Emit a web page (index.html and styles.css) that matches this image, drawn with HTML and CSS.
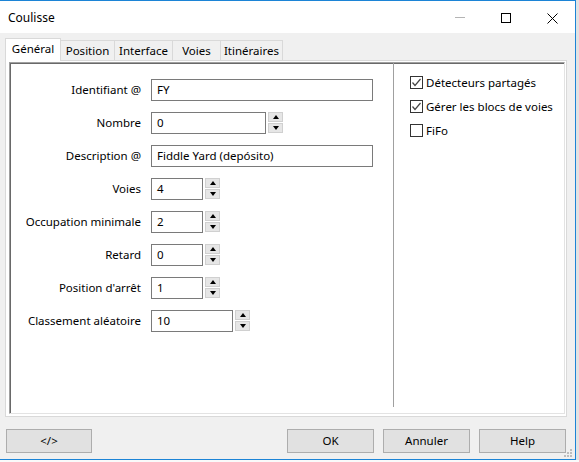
FILE: index.html
```html
<!DOCTYPE html>
<html lang="fr">
<head>
<meta charset="utf-8">
<title>Coulisse</title>
<link rel="stylesheet" href="styles.css">
</head>
<body>
<div class="window">
  <div class="titlebar">
    <span class="title">Coulisse</span>
    <div class="controls">
      <div class="ctl"><svg width="10" height="10" viewBox="0 0 10 10"><path d="M0 4.5H10" stroke="#b4b4b4" stroke-width="1"/></svg></div>
      <div class="ctl"><svg width="10" height="10" viewBox="0 0 10 10"><rect x="0.5" y="0.5" width="9" height="9" fill="none" stroke="#000" stroke-width="1"/></svg></div>
      <div class="ctl"><svg width="11" height="11" viewBox="0 0 11 11"><path d="M0.5 0.5L10.5 10.5M10.5 0.5L0.5 10.5" stroke="#000" stroke-width="1"/></svg></div>
    </div>
  </div>
  <div class="client">
    <div class="tabs">
      <div class="tab active w-gen">Général</div>
      <div class="tab w-pos">Position</div>
      <div class="tab w-int">Interface</div>
      <div class="tab w-voi">Voies</div>
      <div class="tab w-iti">Itinéraires</div>
    </div>
    <div class="panel">
      <div class="frame">
        <div class="form">
          <label class="lbl">Identifiant @</label>
          <div class="field"><div class="input w-long">FY</div></div>

          <label class="lbl">Nombre</label>
          <div class="field"><div class="input w-mid">0</div><div class="spin"><div class="sb"><i class="up"></i></div><div class="sb"><i class="down"></i></div></div></div>

          <label class="lbl">Description @</label>
          <div class="field"><div class="input w-long">Fiddle Yard (depósito)</div></div>

          <label class="lbl">Voies</label>
          <div class="field"><div class="input w-short">4</div><div class="spin"><div class="sb"><i class="up"></i></div><div class="sb"><i class="down"></i></div></div></div>

          <label class="lbl">Occupation minimale</label>
          <div class="field"><div class="input w-short">2</div><div class="spin"><div class="sb"><i class="up"></i></div><div class="sb"><i class="down"></i></div></div></div>

          <label class="lbl">Retard</label>
          <div class="field"><div class="input w-short">0</div><div class="spin"><div class="sb"><i class="up"></i></div><div class="sb"><i class="down"></i></div></div></div>

          <label class="lbl">Position d'arrêt</label>
          <div class="field"><div class="input w-short">1</div><div class="spin"><div class="sb"><i class="up"></i></div><div class="sb"><i class="down"></i></div></div></div>

          <label class="lbl">Classement aléatoire</label>
          <div class="field"><div class="input w-cls">10</div><div class="spin"><div class="sb"><i class="up"></i></div><div class="sb"><i class="down"></i></div></div></div>
        </div>
        <div class="options">
          <div class="check"><span class="box"><svg width="11" height="11" viewBox="0 0 11 11"><path d="M1.5 5.5L4 8.5L9.5 2" fill="none" stroke="#444" stroke-width="1.2"/></svg></span><span class="ctext">Détecteurs partagés</span></div>
          <div class="check"><span class="box"><svg width="11" height="11" viewBox="0 0 11 11"><path d="M1.5 5.5L4 8.5L9.5 2" fill="none" stroke="#444" stroke-width="1.2"/></svg></span><span class="ctext">Gérer les blocs de voies</span></div>
          <div class="check"><span class="box"></span><span class="ctext">FiFo</span></div>
        </div>
      </div>
    </div>
    <div class="buttons">
      <div class="btn">&lt;/&gt;</div>
      <div class="btn-group">
        <div class="btn">OK</div>
        <div class="btn">Annuler</div>
        <div class="btn">Help</div>
      </div>
    </div>
  </div>
  <svg class="grip" width="9" height="9" viewBox="0 0 9 9">
    <rect x="6" y="0" width="2" height="2" fill="#bdbdbd"/>
    <rect x="3" y="3" width="2" height="2" fill="#bdbdbd"/>
    <rect x="6" y="3" width="2" height="2" fill="#bdbdbd"/>
    <rect x="0" y="6" width="2" height="2" fill="#bdbdbd"/>
    <rect x="3" y="6" width="2" height="2" fill="#bdbdbd"/>
    <rect x="6" y="6" width="2" height="2" fill="#bdbdbd"/>
  </svg>
</div>
<div class="behind"></div>
</body>
</html>
```
FILE: styles.css
```css
html, body {
  margin: 0;
  padding: 0;
}
body {
  width: 579px;
  height: 462px;
  overflow: hidden;
  background: #e2e2e2;
  font-family: "Noto Sans", "Open Sans", sans-serif;
  font-size: 11.5px;
  color: #000;
}
.window {
  position: relative;
  box-sizing: border-box;
  width: 576px;
  height: 460px;
  border: 1px solid #1c84d6;
  border-left: none;
  display: flex;
  flex-direction: column;
  background: #f0f0f0;
}
.titlebar {
  height: 32px;
  flex: none;
  background: #fff;
  display: flex;
  align-items: center;
  justify-content: space-between;
}
.title {
  padding-left: 8px;
  font-size: 12px;
  line-height: 16px;
  padding-top: 1px;
}
.controls {
  display: flex;
  height: 32px;
}
.ctl {
  width: 46px;
  height: 32px;
  display: flex;
  align-items: center;
  justify-content: center;
  padding-top: 2px;
  box-sizing: border-box;
}
.ctl svg { display: block; }
.client {
  flex: 1;
  display: flex;
  flex-direction: column;
  padding: 5px 0 0 5px;
}
.tabs {
  display: flex;
  align-items: flex-end;
  height: 22px;
  flex: none;
}
.tab {
  box-sizing: border-box;
  height: 20px;
  border: 1px solid #d9d9d9;
  border-bottom: none;
  margin-left: -1px;
  background: #f0f0f0;
  text-align: center;
  line-height: 19px;
}
.tab.active {
  margin-left: 0;
  height: 23px;
  margin-bottom: -1px;
  background: #fff;
  position: relative;
  z-index: 1;
  line-height: 20px;
}
.w-gen { width: 56px; }
.w-pos { width: 55px; }
.w-int { width: 59px; }
.w-voi { width: 49px; }
.w-iti { width: 63px; }
.panel {
  box-sizing: border-box;
  width: 562px;
  height: 357px;
  flex: none;
  border: 1px solid #d9d9d9;
  background: #fff;
  padding: 1px 1px 2px 3px;
  display: flex;
}
.frame {
  flex: 1;
  display: flex;
  border-top: 1px solid #a0a0a0;
  border-left: 1px solid #a0a0a0;
  border-right: 1px solid #e3e3e3;
  border-bottom: 1px solid #e3e3e3;
  box-shadow: inset 1px 1px 0 #696969;
}
.form {
  box-sizing: border-box;
  width: 384px;
  margin-bottom: 6px;
  border-right: 1px solid #a0a0a0;
  padding-top: 16px;
  display: grid;
  grid-template-columns: 131px auto;
  column-gap: 10px;
  row-gap: 11px;
  align-content: start;
}
.lbl {
  text-align: right;
  line-height: 22px;
  height: 22px;
  white-space: nowrap;
}
.field {
  display: flex;
  align-items: flex-start;
  height: 22px;
}
.input {
  box-sizing: border-box;
  height: 22px;
  border: 1px solid #7a7a7a;
  padding-left: 5px;
  line-height: 20px;
  background: #fff;
  white-space: nowrap;
}
.w-long { width: 222px; }
.w-mid { width: 115px; }
.w-short { width: 52px; }
.w-cls { width: 82px; }
.spin {
  margin-left: 2px;
  width: 15px;
  height: 21px;
  display: flex;
  flex-direction: column;
  gap: 1px;
}
.sb {
  box-sizing: border-box;
  height: 10px;
  background: #e6e6e6;
  border: 1px solid #d0d0d0;
  display: flex;
  align-items: center;
  justify-content: center;
}
.up {
  width: 0;
  height: 0;
  border-left: 3.5px solid transparent;
  border-right: 3.5px solid transparent;
  border-bottom: 4px solid #000;
}
.down {
  width: 0;
  height: 0;
  border-left: 3.5px solid transparent;
  border-right: 3.5px solid transparent;
  border-top: 4px solid #000;
}
.options {
  flex: 1;
  padding: 13px 0 0 16px;
  display: flex;
  flex-direction: column;
  gap: 11px;
}
.check {
  display: flex;
  align-items: center;
  height: 13px;
}
.box {
  box-sizing: border-box;
  width: 13px;
  height: 13px;
  border: 1px solid #333;
  background: #fff;
  display: flex;
  align-items: center;
  justify-content: center;
  flex: none;
}
.box svg { display: block; }
.ctext {
  margin-left: 3px;
  line-height: 13px;
  white-space: nowrap;
}
.buttons {
  display: flex;
  margin-top: 12px;
  padding-left: 1px;
  width: 560px;
}
.btn-group {
  margin-left: auto;
  display: flex;
  gap: 9px;
}
.btn {
  box-sizing: border-box;
  width: 87px;
  height: 24px;
  background: #e1e1e1;
  border: 1px solid #adadad;
  text-align: center;
  line-height: 22px;
}
.buttons > .btn:first-child { width: 86px; }
.grip {
  position: absolute;
  right: 2px;
  bottom: 1px;
}
.behind {
  height: 2px;
  background: #fafafa;
}
```
